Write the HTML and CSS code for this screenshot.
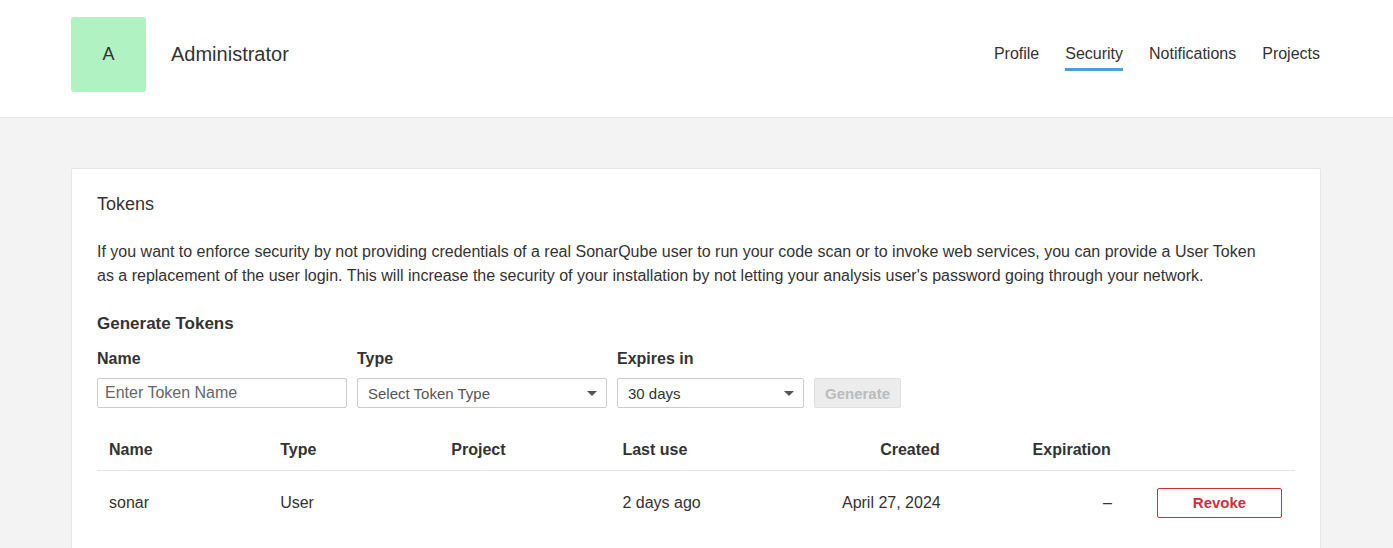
FILE: index.html
```html
<!DOCTYPE html>
<html>
<head>
<meta charset="utf-8">
<link rel="stylesheet" href="styles.css">
</head>
<body>
<header class="top">
  <div class="top-inner">
    <div class="user">
      <div class="avatar">A</div>
      <div class="username">Administrator</div>
    </div>
    <nav class="nav">
      <a class="nav-item">Profile</a>
      <a class="nav-item active">Security</a>
      <a class="nav-item">Notifications</a>
      <a class="nav-item">Projects</a>
    </nav>
  </div>
</header>
<main class="page">
  <section class="card">
    <h2 class="card-title">Tokens</h2>
    <p class="intro">If you want to enforce security by not providing credentials of a real SonarQube user to run your code scan or to invoke web services, you can provide a User Token as a replacement of the user login. This will increase the security of your installation by not letting your analysis user's password going through your network.</p>
    <h3 class="sub-title">Generate Tokens</h3>
    <div class="form">
      <div class="field">
        <label class="label">Name</label>
        <input class="input name-input" type="text" placeholder="Enter Token Name">
      </div>
      <div class="field">
        <label class="label">Type</label>
        <div class="select type-select"><span class="select-text">Select Token Type</span><span class="caret"></span></div>
      </div>
      <div class="field">
        <label class="label">Expires in</label>
        <div class="select exp-select"><span class="select-text dark">30 days</span><span class="caret"></span></div>
      </div>
      <div class="field">
        <button class="btn-generate" disabled>Generate</button>
      </div>
    </div>
    <table class="tokens">
      <thead>
        <tr>
          <th>Name</th>
          <th>Type</th>
          <th>Project</th>
          <th>Last use</th>
          <th class="right">Created</th>
          <th class="right">Expiration</th>
          <th></th>
        </tr>
      </thead>
      <tbody>
        <tr>
          <td>sonar</td>
          <td>User</td>
          <td></td>
          <td>2 days ago</td>
          <td class="right">April 27, 2024</td>
          <td class="right">–</td>
          <td class="right"><button class="btn-revoke">Revoke</button></td>
        </tr>
      </tbody>
    </table>
  </section>
</main>
</body>
</html>
```
FILE: styles.css
```css
* { box-sizing: border-box; }
html, body { margin: 0; padding: 0; }
body {
  font-family: "Liberation Sans", Arial, sans-serif;
  font-size: 16px;
  color: #333;
  background: #f3f3f3;
  height: 548px;
  overflow: hidden;
}
.top {
  background: #fff;
  border-bottom: 1px solid #e6e6e6;
  height: 118px;
}
.top-inner {
  width: 1250px;
  margin: 0 72px 0 71px;
  padding-top: 17px;
  display: flex;
  justify-content: space-between;
  align-items: flex-start;
}
.user { display: flex; align-items: center; }
.avatar {
  width: 75px;
  height: 75px;
  background: #b0f2c2;
  border-radius: 3px;
  display: flex;
  align-items: center;
  justify-content: center;
  font-size: 18px;
  color: #333;
}
.username {
  margin-left: 25px;
  font-size: 20px;
  color: #333;
}
.nav {
  display: flex;
  gap: 26px;
  padding-top: 26px;
  padding-right: 1px;
}
.nav-item {
  font-size: 16px;
  color: #333;
  line-height: 22px;
  padding-bottom: 3px;
  border-bottom: 3px solid transparent;
}
.nav-item.active { border-bottom-color: #4b9fd5; }
.page {
  padding-top: 50px;
}
.card {
  width: 1250px;
  margin: 0 72px 0 71px;
  background: #fff;
  border: 1px solid #e6e6e6;
  border-radius: 2px;
  padding: 23px 25px 0 25px;
  height: 400px;
}
.card-title {
  margin: 0;
  font-size: 18px;
  font-weight: normal;
  line-height: 24px;
  color: #333;
}
.intro {
  margin: 24px 0 0 0;
  line-height: 24px;
  font-size: 16px;
  max-width: 1170px;
}
.sub-title {
  margin: 24px 0 0 0;
  font-size: 17px;
  font-weight: bold;
  line-height: 24px;
}
.form {
  display: flex;
  gap: 10px;
  margin-top: 11px;
  align-items: flex-end;
}
.field { display: flex; flex-direction: column; }
.label {
  font-weight: bold;
  font-size: 16px;
  line-height: 24px;
  margin-bottom: 7px;
}
.input, .select {
  height: 30px;
  border: 1px solid #ccc;
  border-radius: 2px;
  background: #fff;
  font-family: inherit;
}
.input {
  width: 250px;
  padding: 0 7px;
  font-size: 16px;
  color: #333;
}
.input::placeholder { color: #666; }
.select {
  display: flex;
  align-items: center;
  justify-content: space-between;
  padding: 0 9px 0 10px;
}
.type-select { width: 250px; }
.exp-select { width: 187px; }
.select-text { font-size: 15px; color: #555; }
.select-text.dark { color: #333; }
.caret {
  width: 0;
  height: 0;
  border-left: 5px solid transparent;
  border-right: 5px solid transparent;
  border-top: 5px solid #555;
}
.btn-generate {
  width: 87px;
  height: 30px;
  background: #ececec;
  border: 1px solid #e0e0e0;
  border-radius: 2px;
  color: #bbb;
  font-family: inherit;
  font-weight: bold;
  font-size: 15px;
  padding: 0;
}
.tokens {
  width: 100%;
  margin-top: 20px;
  border-collapse: collapse;
  table-layout: fixed;
}
.tokens th, .tokens td {
  padding: 0 12px;
  text-align: left;
  font-size: 16px;
}
.tokens th {
  font-weight: bold;
  height: 42px;
  vertical-align: middle;
  border-bottom: 1px solid #e6e6e6;
  padding-top: 3px;
}
.tokens td {
  height: 64px;
  vertical-align: middle;
  padding-top: 1px;
}
.tokens .right { text-align: right; }
.tokens th.right { padding-right: 13px; }
.tokens td.right:last-child { padding-right: 13px; }
.btn-revoke {
  width: 125px;
  height: 30px;
  background: #fff;
  border: 1px solid #d02f3a;
  border-radius: 2px;
  color: #d02f3a;
  font-family: inherit;
  font-weight: bold;
  font-size: 15px;
  padding: 0;
  vertical-align: middle;
}
```
